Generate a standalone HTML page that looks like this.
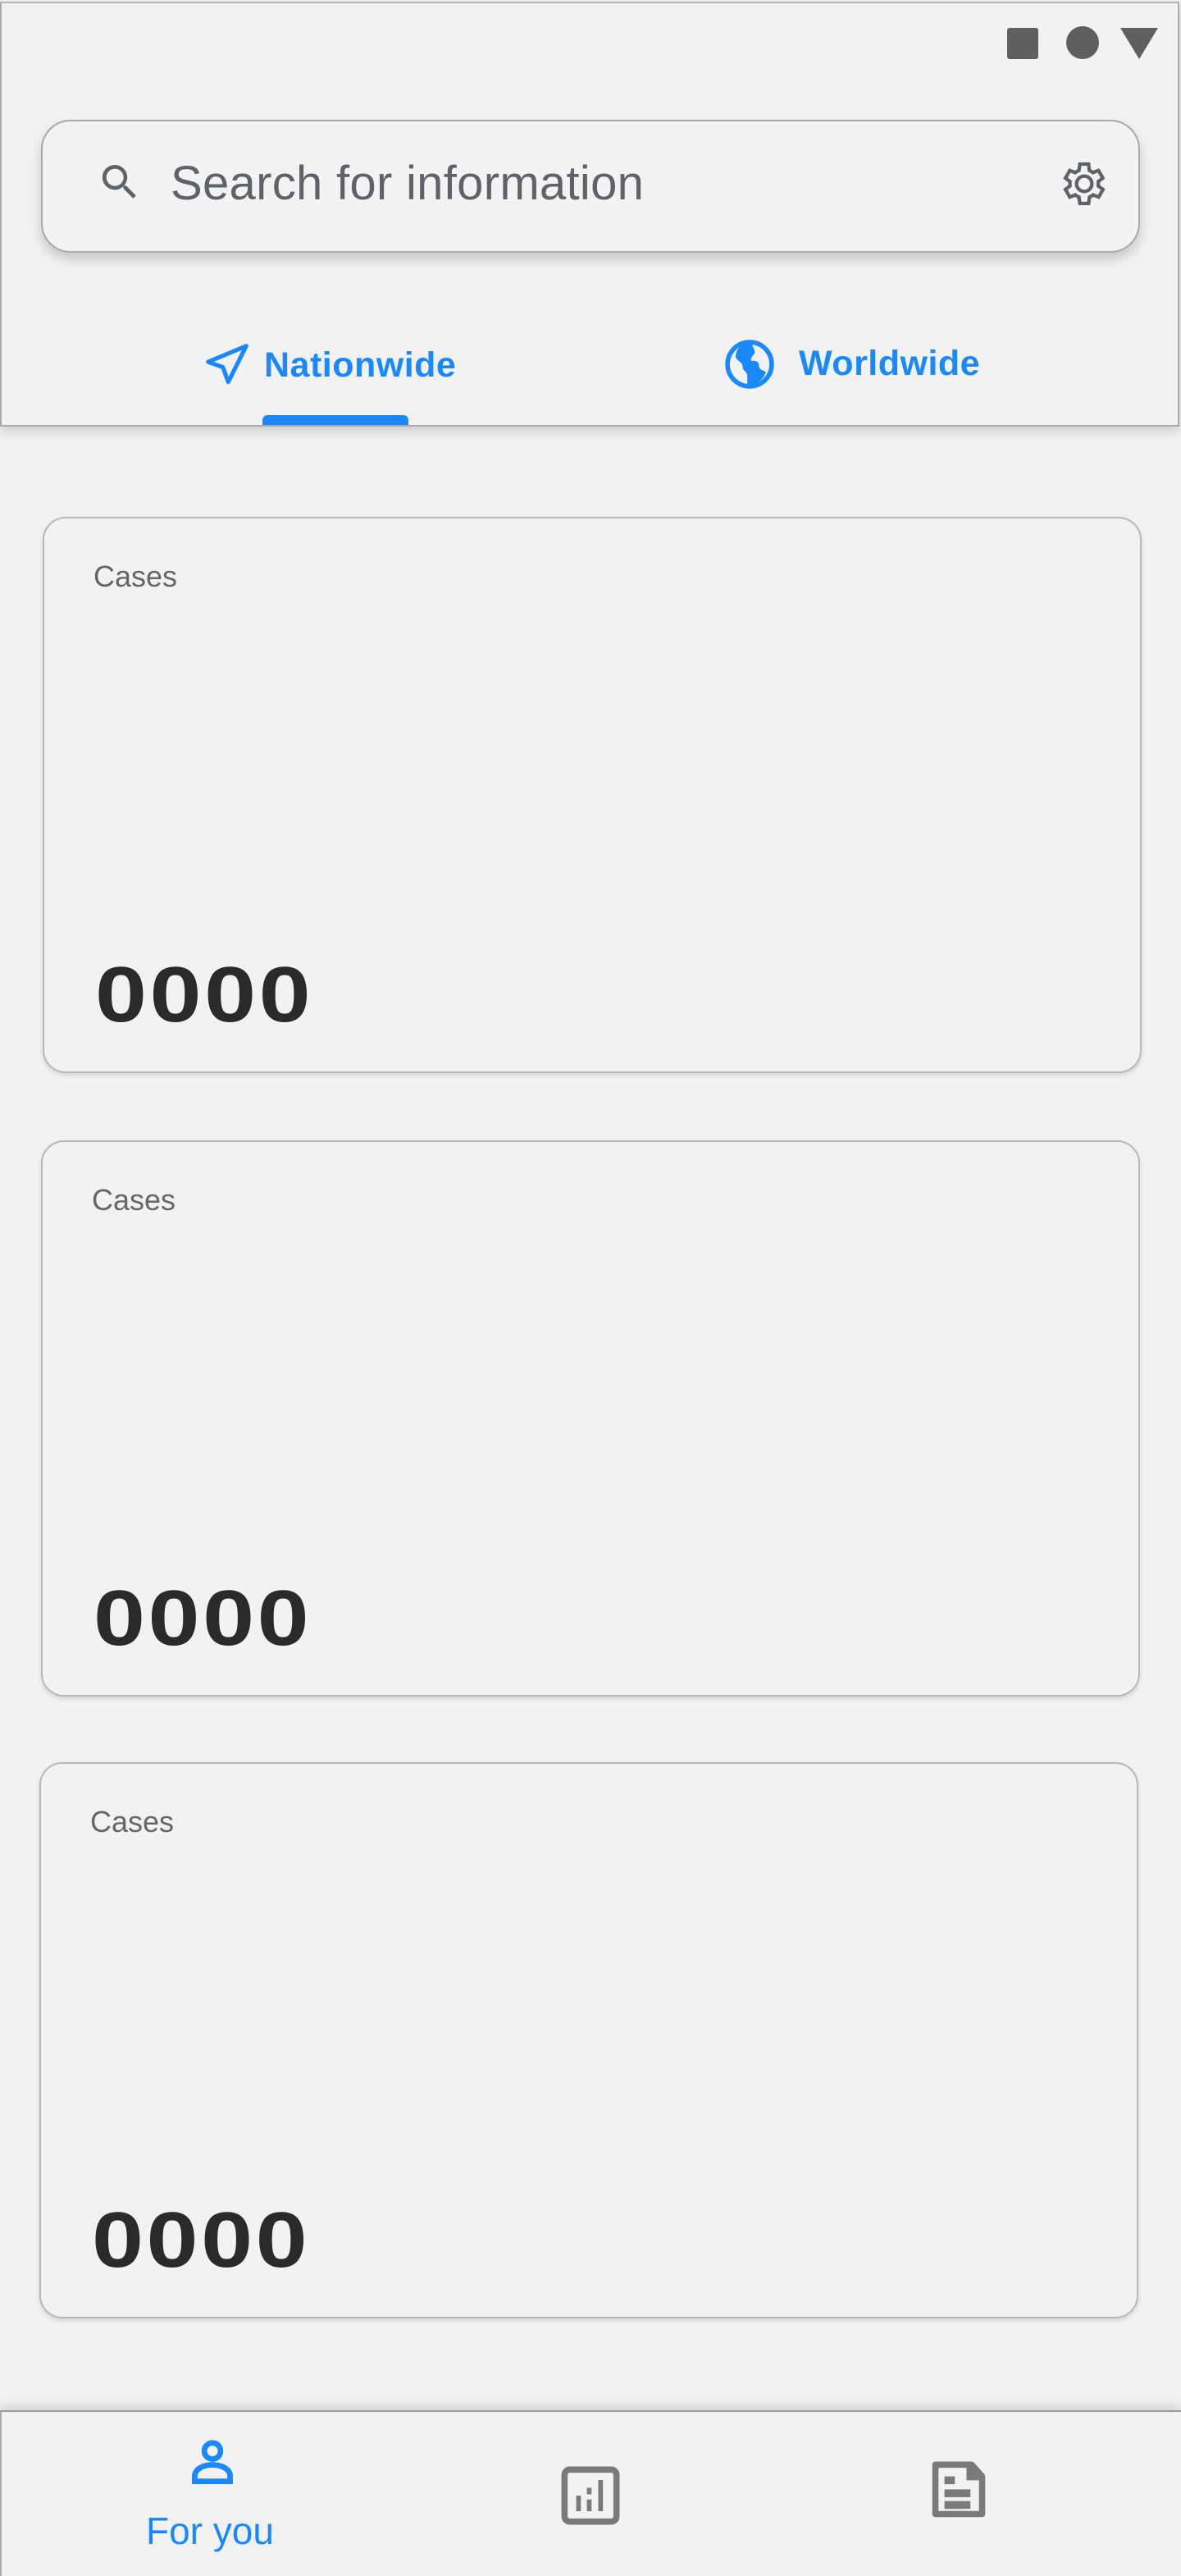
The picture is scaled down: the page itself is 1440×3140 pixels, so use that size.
<!DOCTYPE html>
<html><head><meta charset="utf-8"><style>
*{margin:0;padding:0;box-sizing:border-box}
body{width:1440px;height:3140px;background:#f2f2f2;font-family:"Liberation Sans",sans-serif;position:relative;overflow:hidden}
.abs{position:absolute}
.header{left:0;top:2px;width:1438px;height:518px;border:2px solid #aaa;border-top-color:#b5b5b5;background:#f2f2f2;box-shadow:0 6px 12px rgba(0,0,0,.15)}
.search{left:50px;top:146px;width:1340px;height:162px;border:2px solid #aaa;border-radius:36px;background:#f3f3f3;box-shadow:0 8px 14px rgba(0,0,0,.18)}
.card{width:1340px;height:678px;border:2px solid #b8b8b8;border-radius:28px;background:#f2f2f2;box-shadow:0 3px 6px rgba(0,0,0,.12)}
.card .l{position:absolute;left:60px;top:50px;font-size:36px;color:#666}
.card .n{position:absolute;left:62px;top:526px;font-size:96px;font-weight:bold;color:#2a2a2a;letter-spacing:3px;transform:scaleX(1.18);transform-origin:0 0}
.nav{left:0;top:2938px;width:1440px;height:202px;border-top:2px solid #999;border-left:2px solid #aaa;background:#f2f2f2;box-shadow:0 -6px 12px rgba(0,0,0,.12)}
</style></head><body>
<div class="abs header"></div>
<div class="abs" style="left:1228px;top:34px;width:38px;height:38px;background:#5f5f5f;border-radius:3px"></div>
<div class="abs" style="left:1300px;top:32px;width:40px;height:40px;background:#5f5f5f;border-radius:50%"></div>
<svg class="abs" style="left:1366px;top:34px" width="46" height="40"><polygon points="0,0 46,0 23,38" fill="#5f5f5f"/></svg>
<div class="abs search"></div>
<svg class="abs" style="left:118px;top:194px" width="56" height="56" viewBox="0 0 24 24"><path d="M15.5 14h-.8l-.3-.3A6.5 6.5 0 1 0 9.5 16a6.5 6.5 0 0 0 4.2-1.6l.3.3v.8l5 5 1.5-1.5-5-5zm-6 0A4.5 4.5 0 1 1 14 9.5 4.5 4.5 0 0 1 9.5 14z" fill="#5f6368"/></svg>
<div class="abs" style="left:208px;top:190px;font-size:58px;letter-spacing:0.3px;color:#5f6368">Search for information</div>
<svg class="abs" style="left:1290px;top:192px" width="64" height="64" viewBox="0 0 24 24"><path d="M19.4 13a7.5 7.5 0 0 0 0-2l2.1-1.6-2-3.5-2.5 1a7 7 0 0 0-1.7-1L15 3h-4l-.4 2.9a7 7 0 0 0-1.7 1l-2.5-1-2 3.5L6.5 11a7.5 7.5 0 0 0 0 2l-2.1 1.6 2 3.5 2.5-1a7 7 0 0 0 1.7 1L11 21h4l.4-2.9a7 7 0 0 0 1.7-1l2.5 1 2-3.5zM13 15.5a3.5 3.5 0 1 1 0-7 3.5 3.5 0 0 1 0 7z" fill="none" stroke="#5f6368" stroke-width="1.6" transform="translate(-1 0)"/></svg>
<svg class="abs" style="left:246px;top:414px" width="62" height="62" viewBox="0 0 24 24"><path d="M21 3 3 10.5l7 2.5 2.5 7z" fill="none" stroke="#1a88ff" stroke-width="2" stroke-linejoin="round"/></svg>
<div class="abs" style="left:322px;top:421px;font-size:43px;letter-spacing:0.5px;font-weight:bold;color:#1a88ff">Nationwide</div>
<div class="abs" style="left:320px;top:506px;width:178px;height:12px;background:#1a88ff;border-radius:6px 6px 0 0"></div>
<svg class="abs" style="left:880px;top:410px" width="68" height="68" viewBox="0 0 24 24"><circle cx="12" cy="12" r="9.5" fill="none" stroke="#1a88ff" stroke-width="2"/><path d="M12 2.5C8 3 6 6 6 9c1 2 3 2 3 4s2 2 2 4v4.5c4-.5 7-3 8-6-1-1-3-1-3-3s-2-2-3-2 0-2 1-3-1-3-1-5z" fill="#1a88ff"/></svg>
<div class="abs" style="left:974px;top:419px;font-size:43px;letter-spacing:0.5px;font-weight:bold;color:#1a88ff">Worldwide</div>

<div class="abs card" style="left:52px;top:630px"><div class="l">Cases</div><div class="n">0000</div></div>
<div class="abs card" style="left:50px;top:1390px"><div class="l">Cases</div><div class="n">0000</div></div>
<div class="abs card" style="left:48px;top:2148px"><div class="l">Cases</div><div class="n">0000</div></div>

<div class="abs nav"></div>
<svg class="abs" style="left:222px;top:2966px" width="74" height="74" viewBox="0 0 24 24"><circle cx="12" cy="7" r="3.2" fill="none" stroke="#1a88ff" stroke-width="2.2"/><path d="M5 19v-2c0-3 3.5-4.5 7-4.5s7 1.5 7 4.5v2z" fill="none" stroke="#1a88ff" stroke-width="2.2"/></svg>
<div class="abs" style="left:178px;top:3058px;font-size:46px;color:#1a88ff">For you</div>
<svg class="abs" style="left:680px;top:3004px" width="80" height="76" viewBox="0 0 24 24"><rect x="2" y="2" width="20" height="20" rx="2" fill="none" stroke="#7a7a7a" stroke-width="2.4"/><rect x="6.5" y="12" width="1.8" height="6" fill="#7a7a7a"/><rect x="10.6" y="9" width="1.8" height="2.5" fill="#7a7a7a"/><rect x="10.6" y="13.5" width="1.8" height="4.5" fill="#7a7a7a"/><rect x="15" y="6" width="1.8" height="12" fill="#7a7a7a"/></svg>
<svg class="abs" style="left:1128px;top:2998px" width="82" height="76" viewBox="0 0 24 24"><path d="M3 2h14l4 4.5V21H3z" fill="none" stroke="#7a7a7a" stroke-width="2.4" stroke-linejoin="round"/><path d="M16 2v5h5" fill="#7a7a7a" stroke="#7a7a7a" stroke-width="2"/><rect x="6.5" y="6.5" width="4" height="3" fill="#7a7a7a"/><rect x="6.5" y="11.5" width="10" height="3" fill="#7a7a7a"/><rect x="6.5" y="16" width="10" height="3" fill="#7a7a7a"/></svg>
</body></html>
